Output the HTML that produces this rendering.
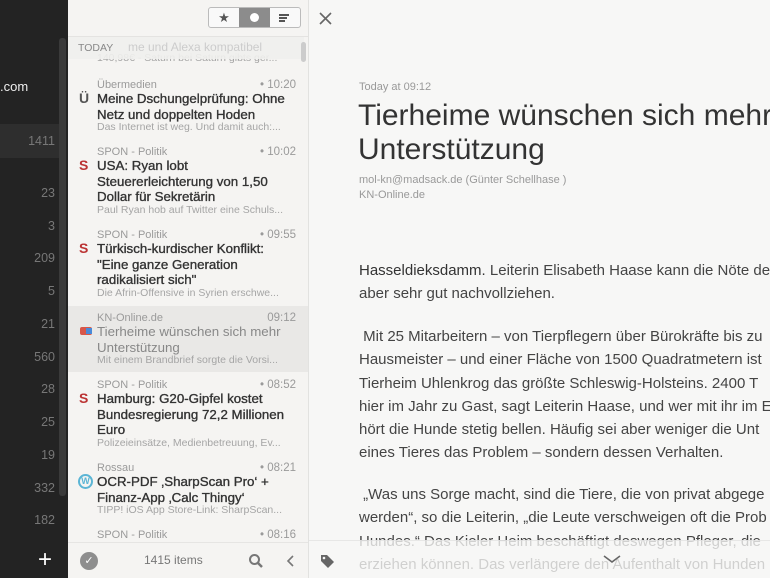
<!DOCTYPE html>
<html><head><meta charset="utf-8"><style>
*{margin:0;padding:0;box-sizing:border-box}
body{width:770px;height:578px;overflow:hidden;position:relative;font-family:"Liberation Sans",sans-serif;background:#f7f7f6}
.a{position:absolute;white-space:nowrap}
#side{left:0;top:0;width:68px;height:578px;background:#232323}
.num{position:absolute;right:13px;color:#777;font-size:12.5px;text-align:right}
#list{left:68px;top:0;width:240px;height:578px;background:#f5f4f2;overflow:hidden}
.src{position:absolute;left:29px;font-size:11px;color:#9a9a9a}
.tm{position:absolute;right:12px;font-size:11.5px;color:#9a9a9a}
.ttl{position:absolute;left:29px;font-size:13.3px;color:#333;font-weight:normal;-webkit-text-stroke:0.35px #333;line-height:15.5px;width:196px;white-space:normal}
.sn{position:absolute;left:29px;font-size:10.5px;color:#a5a5a5}
.ico{position:absolute;left:11px;font-size:14px;font-weight:bold}
.body{position:absolute;left:359px;font-size:15px;color:#444;line-height:23.3px;white-space:nowrap}
</style></head><body>
<div class="a" id="side">
 <div class="a" style="left:0;top:79px;color:#eee;font-size:13px">.com</div>
 <div class="a" style="left:0;top:124px;width:59px;height:34px;background:#2e2e2e"></div>
 <div class="a" style="left:59px;top:38px;width:7px;height:458px;background:#3a3a3a;border-radius:3px"></div>
 <div class="num" style="top:134px">1411</div>
 <div class="num" style="top:186px">23</div>
 <div class="num" style="top:219px">3</div>
 <div class="num" style="top:251px">209</div>
 <div class="num" style="top:284px">5</div>
 <div class="num" style="top:317px">21</div>
 <div class="num" style="top:350px">560</div>
 <div class="num" style="top:382px">28</div>
 <div class="num" style="top:415px">25</div>
 <div class="num" style="top:448px">19</div>
 <div class="num" style="top:481px">332</div>
 <div class="num" style="top:513px">182</div>
 <div class="a" style="left:38px;top:546px;color:#fff;font-size:24px;line-height:28px">+</div>
</div>
<div class="a" id="list">
 <div class="a" style="left:140px;top:7px;width:93px;height:21px;border:1px solid #bbb;border-radius:3px;background:#f9f9f9;overflow:hidden">
  <div class="a" style="left:0;top:0;width:30px;height:19px;text-align:center;font-size:13px;color:#555;line-height:19px">★</div>
  <div class="a" style="left:30px;top:0;width:31px;height:19px;background:#8c8c8c"><div class="a" style="left:11px;top:5px;width:9px;height:9px;border-radius:50%;background:#fff"></div></div>
  <div class="a" style="left:70px;top:6px;width:10px;height:1.5px;background:#555"></div>
  <div class="a" style="left:70px;top:9px;width:8px;height:1.5px;background:#555"></div>
  <div class="a" style="left:70px;top:12px;width:6px;height:1.5px;background:#555"></div>
 </div>
 <div class="a" style="left:0;top:36px;width:240px;height:1px;background:#e4e3e1"></div>
 <div class="sn" style="top:52px">140,98€ - Saturn bei Saturn gibts ger...</div>
 <div class="a" style="left:0;top:37px;width:236px;height:22px;background:rgba(240,239,237,.9)"></div>
 <div class="a" style="left:60px;top:40px;font-size:12px;color:#ccc">me und Alexa kompatibel</div>
 <div class="a" style="left:10px;top:42px;font-size:10.5px;color:#888">TODAY</div>
 <div class="a" style="left:233px;top:42px;width:5px;height:20px;background:#ccc;border-radius:3px"></div>

 <div class="src" style="top:79px">Übermedien</div><div class="tm" style="top:79px">• 10:20</div>
 <div class="ico" style="top:90px;color:#555">Ü</div>
 <div class="ttl" style="top:91px">Meine Dschungelprüfung: Ohne Netz und doppelten Hoden</div>
 <div class="sn" style="top:121px">Das Internet ist weg. Und damit auch:...</div>

 <div class="src" style="top:146px">SPON - Politik</div><div class="tm" style="top:146px">• 10:02</div>
 <div class="ico" style="top:157px;color:#b33">S</div>
 <div class="ttl" style="top:158px">USA: Ryan lobt Steuererleichterung von 1,50 Dollar für Sekretärin</div>
 <div class="sn" style="top:204px">Paul Ryan hob auf Twitter eine Schuls...</div>

 <div class="src" style="top:229px">SPON - Politik</div><div class="tm" style="top:229px">• 09:55</div>
 <div class="ico" style="top:240px;color:#b33">S</div>
 <div class="ttl" style="top:241px">Türkisch-kurdischer Konflikt:<br>"Eine ganze Generation<br>radikalisiert sich"</div>
 <div class="sn" style="top:287px">Die Afrin-Offensive in Syrien erschwe...</div>

 <div class="a" style="left:0;top:306px;width:240px;height:66px;background:#e9e8e6"></div>
 <div class="src" style="top:312px">KN-Online.de</div><div class="tm" style="top:312px">09:12</div>
 <div class="a" style="left:12px;top:327px;width:12px;height:8px;background:#d8574a;border-radius:2px"></div>
 <div class="a" style="left:18px;top:328px;width:6px;height:6px;background:#4a8ad8"></div>
 <div class="ttl" style="top:324px;color:#888;-webkit-text-stroke:0">Tierheime wünschen sich mehr Unterstützung</div>
 <div class="sn" style="top:354px">Mit einem Brandbrief sorgte die Vorsi...</div>

 <div class="src" style="top:379px">SPON - Politik</div><div class="tm" style="top:379px">• 08:52</div>
 <div class="ico" style="top:390px;color:#b33">S</div>
 <div class="ttl" style="top:391px">Hamburg: G20-Gipfel kostet<br>Bundesregierung 72,2 Millionen<br>Euro</div>
 <div class="sn" style="top:437px">Polizeieinsätze, Medienbetreuung, Ev...</div>

 <div class="src" style="top:462px">Rossau</div><div class="tm" style="top:462px">• 08:21</div>
 <div class="a" style="left:10px;top:474px;width:15px;height:15px;border-radius:50%;border:2px solid #5bb5d5;color:#5bb5d5;font-size:9px;text-align:center;line-height:11px;font-weight:bold">W</div>
 <div class="ttl" style="top:474px">OCR-PDF ‚SharpScan Pro‘ +<br>Finanz-App ‚Calc Thingy‘</div>
 <div class="sn" style="top:504px">TIPP! iOS App Store-Link: SharpScan...</div>
 <div class="src" style="top:529px">SPON - Politik</div><div class="tm" style="top:529px">• 08:16</div>

 <div class="a" style="left:0;top:542px;width:240px;height:36px;background:#f5f4f2;border-top:1px solid #e6e5e3"></div>
 <div class="a" style="left:12px;top:552px;width:18px;height:18px;border-radius:50%;background:#8e8e8e;color:#fff;font-size:11px;text-align:center;line-height:18px">✓</div>
 <div class="a" style="left:76px;top:553px;font-size:12px;color:#777">1415 items</div>
 <svg class="a" style="left:180px;top:553px" width="16" height="16"><circle cx="6.5" cy="6.5" r="4.5" stroke="#777" stroke-width="2" fill="none"/><line x1="10" y1="10" x2="14" y2="14" stroke="#777" stroke-width="2.5"/></svg>
 <svg class="a" style="left:218px;top:555px" width="10" height="12"><polyline points="7,1 2,6 7,11" stroke="#777" stroke-width="1.6" fill="none"/></svg>
</div>
<div class="a" style="left:308px;top:0;width:1px;height:578px;background:#e2e2e0"></div>
<svg class="a" style="left:319px;top:12px" width="13" height="13"><path d="M1 1L12 12M12 1L1 12" stroke="#666" stroke-width="1.6"/></svg>
<div class="a" style="left:359px;top:81px;font-size:11px;color:#999">Today at 09:12</div>
<div class="a" style="left:358px;top:99px;font-size:30px;color:#333;line-height:34px">Tierheime wünschen sich mehr<br>Unterstützung</div>
<div class="a" style="left:359px;top:173px;font-size:11px;color:#999;line-height:14.5px">mol-kn@madsack.de (Günter Schellhase )<br>KN-Online.de</div>
<div class="body" style="top:259px"><span style="color:#333">Hasseldieksdamm.</span> Leiterin Elisabeth Haase kann die Nöte de<br>aber sehr gut nachvollziehen.</div>
<div class="body" style="top:325px">&nbsp;Mit 25 Mitarbeitern – von Tierpflegern über Bürokräfte bis zu<br>Hausmeister – und einer Fläche von 1500 Quadratmetern ist<br>Tierheim Uhlenkrog das größte Schleswig-Holsteins. 2400 T<br>hier im Jahr zu Gast, sagt Leiterin Haase, und wer mit ihr im E<br>hört die Hunde stetig bellen. Häufig sei aber weniger die Unt<br>eines Tieres das Problem – sondern dessen Verhalten.</div>
<div class="body" style="top:483px">&nbsp;„Was uns Sorge macht, sind die Tiere, die von privat abgege<br>werden“, so die Leiterin, „die Leute verschweigen oft die Prob<br>Hundes.“ Das Kieler Heim beschäftigt deswegen Pfleger, die<br>erziehen können. Das verlängere den Aufenthalt von Hunden</div>
<div class="a" style="left:309px;top:540px;width:461px;height:38px;background:rgba(247,247,246,.78);border-top:1px solid rgba(220,220,220,.6)"></div>
<svg class="a" style="left:320px;top:554px" width="15" height="14"><path d="M1 1H7L14 8L8 14L1 7Z" fill="#666"/><circle cx="4" cy="4" r="1.3" fill="#f7f7f6"/></svg>
<svg class="a" style="left:603px;top:555px" width="18" height="9"><polyline points="1,1 9,7 17,1" stroke="#666" stroke-width="1.6" fill="none"/></svg>
</body></html>
